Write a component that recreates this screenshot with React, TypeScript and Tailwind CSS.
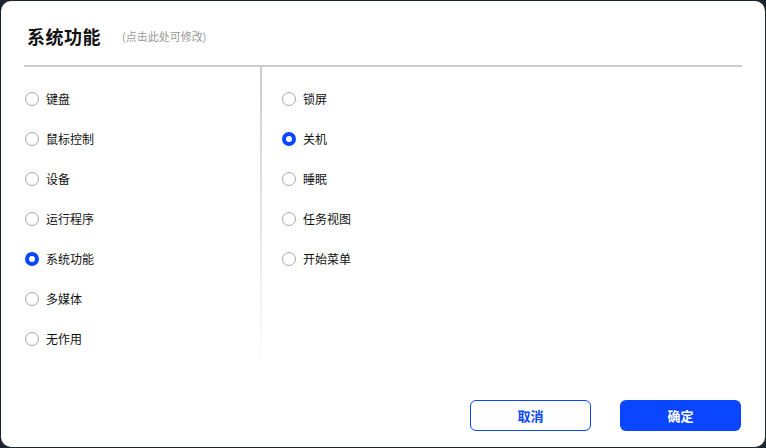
import React, { useState } from 'react';

const leftOptions = ['键盘', '鼠标控制', '设备', '运行程序', '系统功能', '多媒体', '无作用'];
const rightOptions = ['锁屏', '关机', '睡眠', '任务视图', '开始菜单'];

const Radio: React.FC<{ label: string; checked: boolean; onClick: () => void }> = ({ label, checked, onClick }) => (
  <div className="h-10 flex items-center cursor-pointer" onClick={onClick}>
    {checked ? (
      <span className="w-[14px] h-[14px] rounded-full border-[4px] border-[#0a46ff] bg-white shrink-0" />
    ) : (
      <span className="w-[14px] h-[14px] rounded-full border-[1.5px] border-[#a8a8a8] bg-white shrink-0" />
    )}
    <span className="ml-[7px] text-[12px] text-[#111] leading-none">{label}</span>
  </div>
);

export default function App() {
  const [category, setCategory] = useState('系统功能');
  const [action, setAction] = useState('关机');

  return (
    <div
      className="w-[766px] h-[448px] bg-[#1e2430] p-px"
      style={{ fontFamily: '"Microsoft YaHei", "Noto Sans CJK SC", "Noto Sans", sans-serif' }}
    >
      <div className="h-full rounded-[10px] bg-white flex flex-col">
        {/* header */}
        <div className="h-[64px] pt-[6px] pl-[26px] flex items-center">
          <span className="text-[18px] font-bold text-[#111] tracking-[0.5px]">系统功能</span>
          <span className="ml-[21px] text-[11px] text-[#999] mt-[1px]">(点击此处可修改)</span>
        </div>
        <div className="mx-[23px] h-[2px] bg-[#cccccc]" />

        {/* body */}
        <div className="flex h-[310px]">
          <div className="w-[259px] pl-[24px] pt-[12px]">
            {leftOptions.map((o) => (
              <Radio key={o} label={o} checked={category === o} onClick={() => setCategory(o)} />
            ))}
          </div>
          <div className="w-[2px] h-full bg-gradient-to-b from-[#cccccc] to-white" />
          <div className="flex-1 pl-[20px] pt-[12px]">
            {rightOptions.map((o) => (
              <Radio key={o} label={o} checked={action === o} onClick={() => setAction(o)} />
            ))}
          </div>
        </div>

        {/* footer */}
        <div className="flex-1 flex items-end justify-end gap-[29px] pr-[24px] pb-[16px]">
          <button className="w-[121px] h-[31px] rounded-[6px] border border-[#0a46ff] bg-white text-[#0a46ff] text-[13px] font-bold">
            取消
          </button>
          <button className="w-[121px] h-[31px] rounded-[6px] bg-[#0a46ff] text-white text-[13px] font-bold">
            确定
          </button>
        </div>
      </div>
    </div>
  );
}
